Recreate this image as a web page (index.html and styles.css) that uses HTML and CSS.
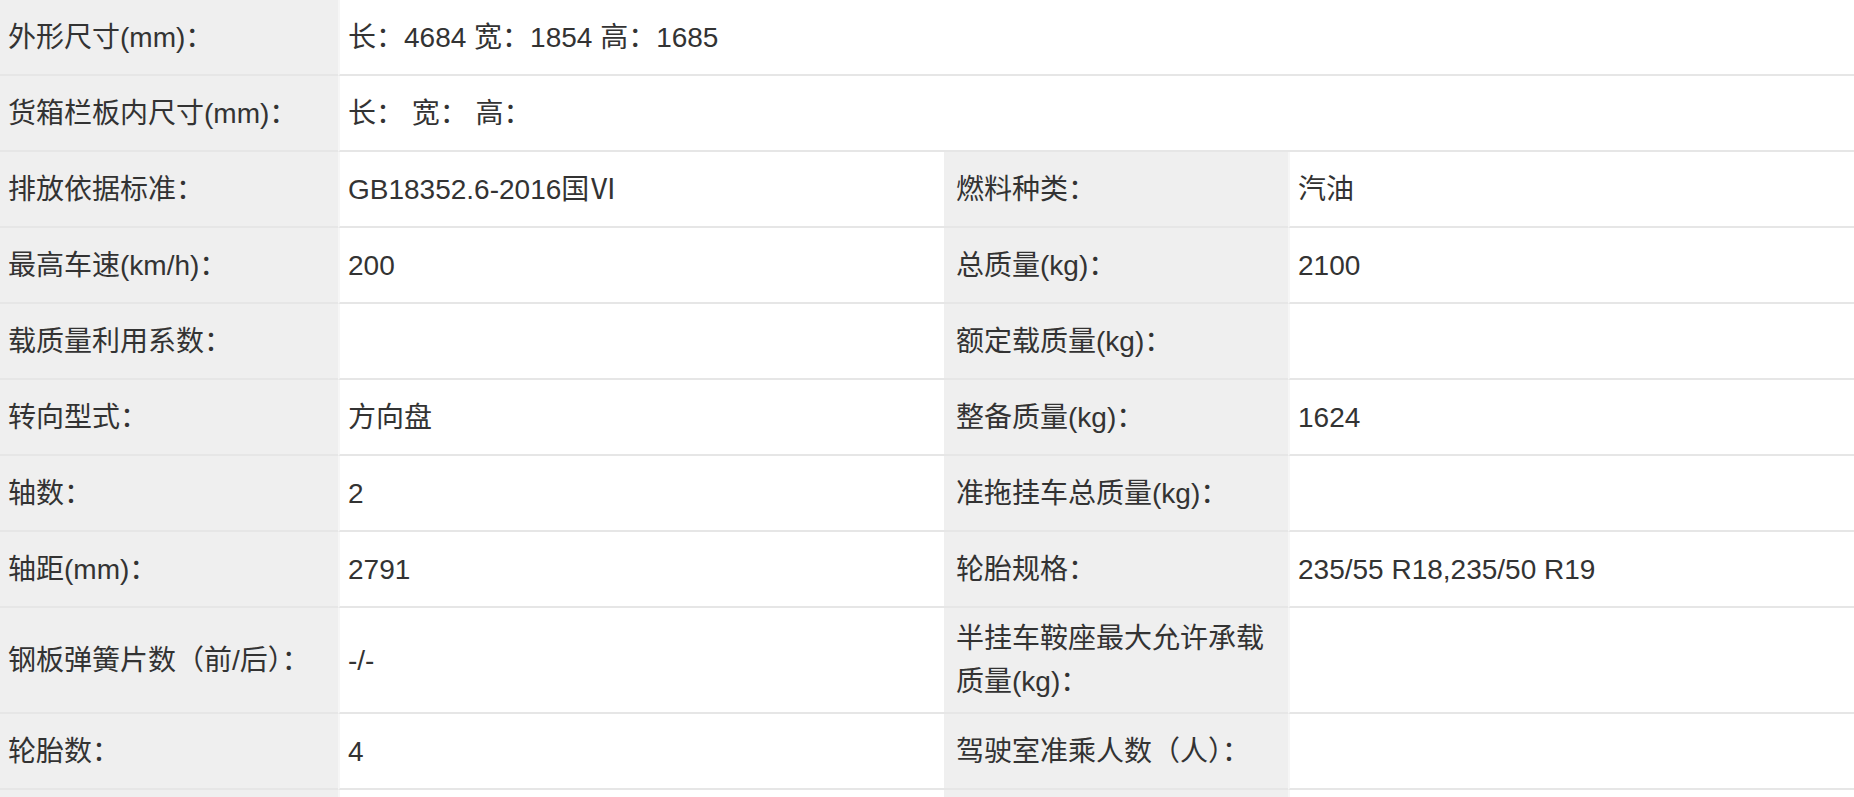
FILE: index.html
```html
<!DOCTYPE html>
<html lang="zh-CN">
<head>
<meta charset="utf-8">
<title>车辆参数</title>
<link rel="stylesheet" href="styles.css">
</head>
<body>
<table class="spec">
  <colgroup>
    <col class="c1"><col class="c2"><col class="c3"><col class="c4">
  </colgroup>
  <tbody>
    <tr><td class="lab first">外形尺寸(mm)：</td><td class="val" colspan="3">长：4684 宽：1854 高：1685</td></tr>
    <tr><td class="lab first">货箱栏板内尺寸(mm)：</td><td class="val" colspan="3">长： 宽： 高：</td></tr>
    <tr><td class="lab first">排放依据标准：</td><td class="val">GB18352.6-2016国Ⅵ</td><td class="lab">燃料种类：</td><td class="val">汽油</td></tr>
    <tr><td class="lab first">最高车速(km/h)：</td><td class="val">200</td><td class="lab">总质量(kg)：</td><td class="val">2100</td></tr>
    <tr><td class="lab first">载质量利用系数：</td><td class="val"></td><td class="lab">额定载质量(kg)：</td><td class="val"></td></tr>
    <tr><td class="lab first">转向型式：</td><td class="val">方向盘</td><td class="lab">整备质量(kg)：</td><td class="val">1624</td></tr>
    <tr><td class="lab first">轴数：</td><td class="val">2</td><td class="lab">准拖挂车总质量(kg)：</td><td class="val"></td></tr>
    <tr><td class="lab first">轴距(mm)：</td><td class="val">2791</td><td class="lab">轮胎规格：</td><td class="val">235/55 R18,235/50 R19</td></tr>
    <tr><td class="lab first">钢板弹簧片数（前/后）：</td><td class="val">-/-</td><td class="lab">半挂车鞍座最大允许承载质量(kg)：</td><td class="val"></td></tr>
    <tr><td class="lab first">轮胎数：</td><td class="val">4</td><td class="lab">驾驶室准乘人数（人）：</td><td class="val"></td></tr>
    <tr><td class="lab first"></td><td class="val"></td><td class="lab"></td><td class="val"></td></tr>
  </tbody>
</table>
</body>
</html>
```

FILE: styles.css
```css
html, body {
  margin: 0;
  padding: 0;
  background: #ffffff;
}

.spec {
  width: 1854px;
  table-layout: fixed;
  border-collapse: separate;
  border-spacing: 0;
  font-family: "Liberation Sans", "Noto Sans CJK SC", sans-serif;
  font-size: 28px;
  line-height: 43px;
  color: #333333;
}

.c1 { width: 338px; }
.c2 { width: 606px; }
.c3 { width: 344px; }
.c4 { width: 566px; }

.spec td {
  height: 56px;
  padding: 9px 12px 9px 10px;
  border-bottom: 2px solid #e6e6e6;
  vertical-align: middle;
  text-align: left;
  word-break: break-all;
}

.spec .lab {
  background: #efefef;
  padding-left: 12px;
}

.spec .lab.first {
  padding-left: 8px;
}

.spec .val {
  background: #ffffff;
  border-left: 2px solid #f6f6f6;
  padding-left: 8px;
}
```
